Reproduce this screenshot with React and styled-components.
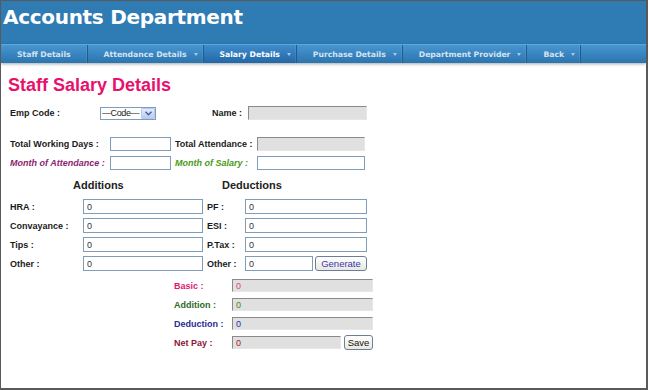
import styled, { createGlobalStyle } from "styled-components";

const GlobalStyle = createGlobalStyle`
  html, body { margin: 0; padding: 0; background: #fff; }
  body { font-family: "Liberation Sans", Arial, sans-serif; }
`;

const navItems = [
  { label: "Staff Details" },
  { label: "Attendance Details", arrow: true },
  { label: "Salary Details", arrow: true, active: true },
  { label: "Purchase Details", arrow: true },
  { label: "Department Provider", arrow: true },
  { label: "Back", arrow: true },
];

const additions = ["HRA :", "Convayance :", "Tips :"];
const deductions = ["PF :", "ESI :", "P.Tax :"];

const totals = [
  { label: "Basic :", color: "#e0186e", value: "#e0407f" },
  { label: "Addition :", color: "#2f6a1f", value: "#3a8a2a" },
  { label: "Deduction :", color: "#2b2b94", value: "#2a2ab0" },
];

const App = () => {
  return (
    <Frame>
      <GlobalStyle />
      <Header>
        <h1>Accounts Department</h1>
      </Header>
      <Nav>
        {navItems.map((item) => (
          <NavItem key={item.label} $arrow={item.arrow} $active={item.active}>
            {item.label}
            {item.arrow && <Caret />}
          </NavItem>
        ))}
      </Nav>
      <Content>
        <Title>Staff Salary Details</Title>
        <Form>
          <EmpRow>
            <Label>Emp Code :</Label>
            <FakeSelect>
              <span>—Code—</span>
              <SelectArrow>
                <svg width="7" height="5" viewBox="0 0 7 5">
                  <path d="M0.5 0.8 L3.5 3.8 L6.5 0.8" fill="none" stroke="#4d6185" strokeWidth="1.4" />
                </svg>
              </SelectArrow>
            </FakeSelect>
            <Label $right>Name :</Label>
            <Input $gray readOnly />
          </EmpRow>

          <InfoGrid>
            <Label>Total Working Days :</Label>
            <Input />
            <Label $indent>Total Attendance :</Label>
            <Input $gray readOnly />
            <Label $italic $color="#8b2470">Month of Attendance :</Label>
            <Input />
            <Label $italic $indent $color="#4a9a16">Month of Salary :</Label>
            <Input />
          </InfoGrid>

          <Headings>
            <Heading $indent={63}>Additions</Heading>
            <Heading $indent={19}>Deductions</Heading>
          </Headings>

          <MoneyGrid>
            {additions.map((a, i) => (
              <Row key={a}>
                <Label>{a}</Label>
                <Input defaultValue="0" />
                <Label $indent>{deductions[i]}</Label>
                <Input defaultValue="0" />
              </Row>
            ))}
            <Label>Other :</Label>
            <Input defaultValue="0" />
            <Label $indent>Other :</Label>
            <Inline $gap={2}>
              <Input defaultValue="0" $w={68} />
              <Button $w={52} $color="#3a35b5">Generate</Button>
            </Inline>
          </MoneyGrid>

          <TotalsGrid>
            {totals.map((t) => (
              <Row key={t.label}>
                <Label $color={t.color}>{t.label}</Label>
                <Input $gray readOnly defaultValue="0" $text={t.value} />
              </Row>
            ))}
            <Label $color="#8b1538">Net Pay :</Label>
            <Inline $gap={3}>
              <Input $gray readOnly defaultValue="0" $text="#a02040" $w={109} />
              <Button $w={36}>Save</Button>
            </Inline>
          </TotalsGrid>
        </Form>
      </Content>
    </Frame>
  );
};

export default App;

const Frame = styled.div`
  width: 648px;
  height: 390px;
  box-sizing: border-box;
  border: 1px solid #5a5a5a;
  border-right-width: 2px;
  border-bottom-width: 2px;
  overflow: hidden;
  background: #fff;
`;

const Header = styled.header`
  height: 43px;
  box-sizing: border-box;
  padding: 4px 0 0 2px;
  background: #2f7bb4;
  h1 {
    margin: 0;
    font: bold 20px/24px "DejaVu Sans", Verdana, sans-serif;
    letter-spacing: -0.3px;
    color: #fff;
  }
`;

const Nav = styled.nav`
  display: flex;
  height: 19px;
  box-sizing: border-box;
  border-top: 1px solid #5ea6de;
  background: linear-gradient(#4795d1, #2c75af);
  box-shadow: 0 1px 3px rgba(0, 0, 0, 0.35);
  position: relative;
`;

const NavItem = styled.a`
  display: flex;
  align-items: center;
  padding: 0 ${(p) => (p.$arrow ? "5px" : "16px")} 0 16px;
  border-right: 1px solid #1f5b8e;
  box-shadow: inset -1px 0 0 rgba(255, 255, 255, 0.08);
  font: bold 7.7px "DejaVu Sans", Verdana, sans-serif;
  color: ${(p) => (p.$active ? "#ffffff" : "#d3e3f1")};
  background: ${(p) => (p.$active ? "linear-gradient(#3f8dcc, #2467a6)" : "transparent")};
  white-space: nowrap;
`;

const Caret = styled.span`
  width: 0;
  height: 0;
  margin-left: 7px;
  border-left: 2.5px solid transparent;
  border-right: 2.5px solid transparent;
  border-top: 3px solid #a9c8e2;
`;

const Content = styled.main`
  padding: 13px 0 0 7px;
`;

const Title = styled.h2`
  margin: 0;
  font: bold 18px/18px "Liberation Sans", Arial, sans-serif;
  color: #e8116b;
`;

const Form = styled.div`
  padding-left: 2px;
`;

const Label = styled.label`
  font: bold 9px "Liberation Sans", Arial, sans-serif;
  font-style: ${(p) => (p.$italic ? "italic" : "normal")};
  color: ${(p) => p.$color || "#1a1a1a"};
  text-align: ${(p) => (p.$right ? "right" : "left")};
  padding-right: ${(p) => (p.$right ? "6px" : "0")};
  padding-left: ${(p) => (p.$indent ? "4px" : "0")};
  white-space: nowrap;
`;

const Input = styled.input`
  box-sizing: border-box;
  width: ${(p) => (p.$w ? `${p.$w}px` : "100%")};
  height: 100%;
  margin: 0;
  padding: 0 3px;
  outline: none;
  font: 9px "Liberation Sans", Arial, sans-serif;
  color: ${(p) => p.$text || "#333"};
  background: ${(p) => (p.$gray ? "#e0e0e0" : "#fff")};
  border: 1px solid #7f9db9;
  border-color: ${(p) => (p.$gray ? "#8a8a8a #e6e6e6 #e6e6e6 #8a8a8a" : "#7f9db9")};
`;

const FakeSelect = styled.div`
  display: flex;
  align-items: stretch;
  box-sizing: border-box;
  width: 56px;
  height: 13px;
  border: 1px solid #7f9db9;
  background: #fff;
  font: 9px "Liberation Sans", Arial, sans-serif;
  color: #222;
  span:first-child {
    flex: 1;
    padding-left: 1px;
    line-height: 11px;
    white-space: nowrap;
    overflow: hidden;
    letter-spacing: -0.4px;
  }
`;

const SelectArrow = styled.span`
  display: flex;
  align-items: center;
  justify-content: center;
  flex: none;
  width: 12px;
  border: 1px solid #b8c9ef;
  border-radius: 1px;
  background: linear-gradient(#e2ebfd, #b7cbf4);
`;

const EmpRow = styled.div`
  display: grid;
  grid-template-columns: 90px 56px 92px 119px;
  align-items: center;
  height: 14px;
  margin-top: 12px;
`;

const InfoGrid = styled.div`
  display: grid;
  grid-template-columns: 100px 61px 86px 108px;
  grid-auto-rows: 14px;
  row-gap: 5px;
  align-items: center;
  margin-top: 17px;
`;

const Headings = styled.div`
  display: grid;
  grid-template-columns: 193px 163px;
  margin-top: 8px;
`;

const Heading = styled.h3`
  margin: 0;
  padding-left: ${(p) => p.$indent}px;
  font: bold 11px/14px "Liberation Sans", Arial, sans-serif;
  color: #222;
`;

const MoneyGrid = styled.div`
  display: grid;
  grid-template-columns: 73px 120px 42px 122px;
  grid-auto-rows: 15px;
  row-gap: 4px;
  align-items: center;
  margin-top: 7px;
`;

const Row = styled.div`
  display: contents;
`;

const Inline = styled.div`
  display: flex;
  gap: ${(p) => p.$gap}px;
  height: 100%;
  align-items: center;
`;

const Button = styled.button`
  box-sizing: border-box;
  width: ${(p) => p.$w}px;
  height: 15px;
  padding: 0;
  border: 1px solid #6b7f99;
  border-radius: 3px;
  background: linear-gradient(#ffffff, #e9e7df);
  font: 9.5px "Liberation Sans", Arial, sans-serif;
  color: ${(p) => p.$color || "#111"};
`;

const TotalsGrid = styled.div`
  display: grid;
  grid-template-columns: 58px 141px;
  grid-auto-rows: 13px;
  row-gap: 6px;
  align-items: center;
  margin: 8px 0 0 164px;
`;
